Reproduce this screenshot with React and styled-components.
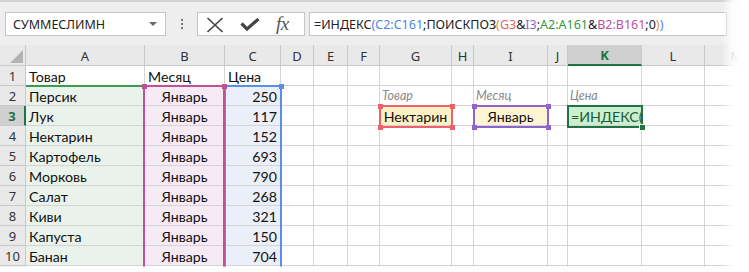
import styled, { createGlobalStyle } from 'styled-components'

const GlobalStyle = createGlobalStyle`
  html, body { margin: 0; padding: 0; background: #fff; overflow: hidden; }
  * { box-sizing: border-box; }
`

const COLS = [
  { key: 'A', w: 119 },
  { key: 'B', w: 80 },
  { key: 'C', w: 56 },
  { key: 'D', w: 33 },
  { key: 'E', w: 34 },
  { key: 'F', w: 32 },
  { key: 'G', w: 72 },
  { key: 'H', w: 22 },
  { key: 'I', w: 74 },
  { key: 'J', w: 20 },
  { key: 'K', w: 74 },
  { key: 'L', w: 63 },
  { key: 'M', w: 64 },
]

const DATA = [
  ['Персик', 250],
  ['Лук', 117],
  ['Нектарин', 152],
  ['Картофель', 693],
  ['Морковь', 790],
  ['Салат', 268],
  ['Киви', 321],
  ['Капуста', 150],
  ['Банан', 704],
]

const FILLS = { A: '#eaf3eb', B: '#f6ebf4', C: '#ebeff9' }

// ячейки справа (G2:K3)
const SIDE = {
  '2G': { text: 'Товар', label: true },
  '2I': { text: 'Месяц', label: true },
  '2K': { text: 'Цена', label: true },
  '3G': { text: 'Нектарин', align: 'center', bg: '#fff1c6' },
  '3I': { text: 'Январь', align: 'center', bg: '#fcf4d2' },
  '3K': { text: '=ИНДЕКС(С', bg: '#c9efd0', color: '#1d5a33' },
}

const FORMULA = [
  ['=ИНДЕКС', '#222'],
  ['(', '#4a86e8'],
  ['C2:C161', '#4a86e8'],
  [';ПОИСКПОЗ', '#222'],
  ['(', '#e69138'],
  ['G3', '#e06666'],
  ['&', '#222'],
  ['I3', '#8e63ce'],
  [';', '#222'],
  ['A2:A161', '#2f9a45'],
  ['&', '#222'],
  ['B2:B161', '#c0509a'],
  [';0', '#222'],
  [')', '#e69138'],
  [')', '#4a86e8'],
]

const cellFor = (row, key) => {
  if (row === 1) {
    return { text: { A: 'Товар', B: 'Месяц', C: 'Цена' }[key] }
  }
  if (row >= 2 && row <= 10) {
    const item = DATA[row - 2]
    if (key === 'A') return { text: item[0], bg: FILLS.A }
    if (key === 'B') return { text: 'Январь', align: 'center', bg: FILLS.B }
    if (key === 'C') return { text: item[1], align: 'right', bg: FILLS.C }
  }
  return SIDE[`${row}${key}`] || {}
}

const App = () => {
  const rows = Array.from({ length: 11 }, (_, i) => i + 1)
  return (
    <>
      <GlobalStyle />
      <Frame>
        <Toolbar>
          <NameBox>
            <span>СУММЕСЛИМН</span>
            <DropArrow />
          </NameBox>
          <Grip>
            <i />
            <i />
            <i />
          </Grip>
          <ButtonBox>
            <IconSlot>
              <svg width="18" height="16" viewBox="0 0 18 16">
                <path d="M1.5 1 L16.5 15 M16.5 1 L1.5 15" stroke="#444" strokeWidth="1.7" fill="none" />
              </svg>
            </IconSlot>
            <IconSlot>
              <svg width="20" height="13" viewBox="0 0 20 13">
                <path d="M1.5 5.5 L7 11 L18.5 1" stroke="#444" strokeWidth="3.2" fill="none" />
              </svg>
            </IconSlot>
            <Fx>fx</Fx>
          </ButtonBox>
          <FormulaBox>
            {FORMULA.map(([t, c], i) => (
              <Tok key={i} $color={c}>
                {t}
              </Tok>
            ))}
          </FormulaBox>
        </Toolbar>

        <Sheet>
          <Corner $r={1} $c={1}>
            <svg width="13" height="13" viewBox="0 0 13 13">
              <path d="M13 0 L13 13 L0 13 Z" fill="#b3b3b3" />
            </svg>
          </Corner>
          {COLS.map((c, ci) => (
            <ColHead key={c.key} $r={1} $c={ci + 2} $active={c.key === 'K'}>
              {c.key}
            </ColHead>
          ))}

          {rows.map((r) => [
            <RowHead key={`h${r}`} $r={r + 1} $c={1} $active={r === 3}>
              {r <= 10 ? r : ''}
            </RowHead>,
            ...COLS.map((c, ci) => {
              const cell = cellFor(r, c.key)
              return (
                <Cell
                  key={`${r}${c.key}`}
                  $r={r + 1}
                  $c={ci + 2}
                  $bg={cell.bg}
                  $align={cell.align}
                  $label={cell.label}
                  $color={cell.color}
                >
                  {cell.text}
                </Cell>
              )
            }),
          ])}

          {/* диапазоны из формулы */}
          <Range $col={2} $row={3} $span={10} $color="#3d9b50" $sides="top" $ml={0} $mr={-1} />
          <Range $col={4} $row={3} $span={10} $color="#5b8fe6" $sides="top right left" $ml={-1} $mr={-1}>
            <Handle $color="#5b8fe6" $pos="tr" />
          </Range>
          <Range $col={3} $row={3} $span={10} $color="#c0509a" $sides="top right left" $ml={-2} $mr={0}>
            <Handle $color="#c0509a" $pos="tl" />
            <Handle $color="#c0509a" $pos="tr" />
          </Range>

          <Range $col={8} $row={4} $span={1} $color="#ec626a" $sides="all" $ml={-1} $mr={-1} $mb={-2}>
            <Handle $color="#ec626a" $pos="tl" />
            <Handle $color="#ec626a" $pos="tr" />
            <Handle $color="#ec626a" $pos="bl" />
            <Handle $color="#ec626a" $pos="br" />
          </Range>
          <Range $col={10} $row={4} $span={1} $color="#8e63ce" $sides="all" $ml={-1} $mr={-1} $mb={-2}>
            <Handle $color="#8e63ce" $pos="tl" />
            <Handle $color="#8e63ce" $pos="tr" />
            <Handle $color="#8e63ce" $pos="bl" />
            <Handle $color="#8e63ce" $pos="br" />
          </Range>
          <Range $col={12} $row={4} $span={1} $color="#217346" $sides="all" $ml={-1} $mr={-1} $mb={-2}>
            <Handle $color="#217346" $pos="br" $ring />
          </Range>
        </Sheet>
        <EdgeFade />
      </Frame>
    </>
  )
}

const Frame = styled.div`
  position: relative;
  width: 749px;
  height: 272px;
  overflow: hidden;
  background: #fff;
`

const Toolbar = styled.div`
  height: 45px;
  display: flex;
  align-items: flex-start;
  padding: 10px 0 0 5px;
  background: #eeeeee;
  border-top: 2px solid #d3d3d3;
  font-family: 'Noto Sans', 'Open Sans', sans-serif;
  font-size: 12.5px;
  color: #222;
`

const NameBox = styled.div`
  width: 161px;
  height: 24px;
  display: flex;
  align-items: center;
  justify-content: space-between;
  padding: 0 8px 0 7px;
  background: #fff;
  border: 1px solid #c6c6c6;
`

const DropArrow = styled.div`
  width: 0;
  height: 0;
  border-left: 4px solid transparent;
  border-right: 4px solid transparent;
  border-top: 4px solid #6a6a6a;
`

const Grip = styled.div`
  width: 31px;
  height: 24px;
  display: flex;
  flex-direction: column;
  align-items: center;
  justify-content: center;
  gap: 2px;

  i {
    width: 2px;
    height: 2px;
    background: #777;
  }
`

const ButtonBox = styled.div`
  width: 108px;
  height: 24px;
  display: flex;
  align-items: center;
  padding-left: 8px;
  background: #fff;
  border: 1px solid #c6c6c6;
`

const IconSlot = styled.div`
  width: 34px;
  display: flex;
  align-items: center;
  padding-top: 1px;
`

const Fx = styled.span`
  font-family: 'Liberation Serif', serif;
  font-style: italic;
  font-size: 19px;
  color: #555;
  letter-spacing: -0.5px;
  padding-left: 2px;
`

const FormulaBox = styled.div`
  width: 418px;
  height: 24px;
  margin-left: 4px;
  display: flex;
  align-items: center;
  padding-left: 4px;
  background: #fff;
  border: 1px solid #c6c6c6;
  white-space: pre;
  overflow: hidden;
`

const Tok = styled.span`
  color: ${(p) => p.$color};
`

const Sheet = styled.div`
  display: grid;
  grid-template-columns: 26px ${COLS.map((c) => `${c.w}px`).join(' ')};
  grid-template-rows: 21px repeat(11, 20px);
  font-family: Lato, 'Noto Sans', sans-serif;
  font-size: 14.2px;
  color: #111;
`

const Placed = styled.div`
  grid-row: ${(p) => p.$r};
  grid-column: ${(p) => p.$c};
`

const HeadBase = styled(Placed)`
  display: flex;
  align-items: center;
  justify-content: center;
  background: #e9e9e9;
  border-right: 1px solid #c9c9c9;
  border-bottom: 1px solid #c9c9c9;
  font-family: 'Noto Sans', sans-serif;
  font-size: 13px;
  color: #333;
`

const Corner = styled(HeadBase)`
  align-items: flex-end;
  justify-content: flex-end;
  padding: 0 2px 2px 0;
`

const ColHead = styled(HeadBase)`
  padding-top: 1px;
  ${(p) =>
    p.$active &&
    `
    background: #d0d0d0;
    color: #217346;
    font-weight: 700;
    border-bottom: 2px solid #217346;
  `}
`

const RowHead = styled(HeadBase)`
  ${(p) =>
    p.$active &&
    `
    background: #d0d0d0;
    color: #217346;
    font-weight: 700;
    border-right: 2px solid #217346;
  `}
`

const Cell = styled(Placed)`
  display: flex;
  align-items: center;
  justify-content: ${(p) =>
    p.$align === 'center' ? 'center' : p.$align === 'right' ? 'flex-end' : 'flex-start'};
  padding: 1px 3px 0 3px;
  background: ${(p) => p.$bg || '#fff'};
  border-right: 1px solid #d4d4d4;
  border-bottom: 1px solid #d4d4d4;
  white-space: nowrap;
  overflow: hidden;
  color: ${(p) => p.$color || (p.$label ? '#8a8a8a' : '#111')};
  ${(p) =>
    p.$label &&
    `
    font-style: italic;
    font-size: 12.5px;
    padding-left: 2px;
    align-items: flex-end;
    padding-bottom: 2px;
  `}
`

const Range = styled.div`
  position: relative;
  grid-column: ${(p) => p.$col};
  grid-row: ${(p) => p.$row} / span ${(p) => p.$span};
  margin: -1px ${(p) => p.$mr}px ${(p) => p.$mb || 0}px ${(p) => p.$ml}px;
  pointer-events: none;
  border: 0 solid ${(p) => p.$color};
  border-top-width: 2px;
  ${(p) =>
    p.$sides === 'all'
      ? 'border-width: 2px;'
      : `
    border-left-width: ${p.$sides.includes('left') ? 2 : 0}px;
    border-right-width: ${p.$sides.includes('right') ? 2 : 0}px;
  `}
`

const Handle = styled.span`
  position: absolute;
  width: 5px;
  height: 5px;
  background: ${(p) => p.$color};
  ${(p) => (p.$pos[0] === 't' ? 'top: -3.5px;' : 'bottom: -3.5px;')}
  ${(p) => (p.$pos[1] === 'l' ? 'left: -3.5px;' : 'right: -3.5px;')}
  ${(p) => p.$ring && 'outline: 1px solid #fff;'}
`

const EdgeFade = styled.div`
  position: absolute;
  inset: 0;
  pointer-events: none;
  background: linear-gradient(to right, rgba(255, 255, 255, 0) 722px, rgba(255, 255, 255, 0.85) 732px, #fff 740px),
    linear-gradient(to bottom, rgba(255, 255, 255, 0) 266px, rgba(255, 255, 255, 0.92) 267px, #fff 270px);
`

export default App
